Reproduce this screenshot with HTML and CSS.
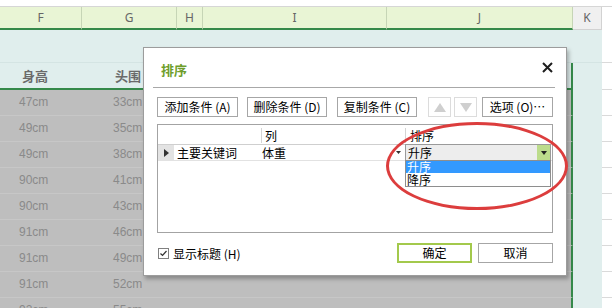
FILE: index.html
```html
<!DOCTYPE html>
<html lang="zh">
<head>
<meta charset="utf-8">
<title>排序</title>
<link rel="stylesheet" href="styles.css">
</head>
<body>
<div class="sheet">
  <div class="top"></div>
  <div class="row colhead">
    <div class="c f">F</div><div class="c g">G</div><div class="c h">H</div><div class="c i">I</div><div class="c j">J</div><div class="c k">K</div><div class="c rest"></div>
  </div>
  <div class="row r1">
    <div class="c f"></div><div class="c g"></div><div class="c h"></div><div class="c i"></div><div class="c j"></div><div class="c k"></div><div class="c rest"></div>
  </div>
  <div class="row r2">
    <div class="c f s">身高</div><div class="c g s">头围</div><div class="c h s"></div><div class="c i s"></div><div class="c j s"></div><div class="c k"></div><div class="c rest"></div>
  </div>
  <div class="row d"><div class="c f s">47cm</div><div class="c g s">33cm</div><div class="c h s"></div><div class="c i s"></div><div class="c j s"></div><div class="c k"></div><div class="c rest"></div></div>
  <div class="row d"><div class="c f s">49cm</div><div class="c g s">35cm</div><div class="c h s"></div><div class="c i s"></div><div class="c j s"></div><div class="c k"></div><div class="c rest"></div></div>
  <div class="row d"><div class="c f s">49cm</div><div class="c g s">38cm</div><div class="c h s"></div><div class="c i s"></div><div class="c j s"></div><div class="c k"></div><div class="c rest"></div></div>
  <div class="row d"><div class="c f s">90cm</div><div class="c g s">41cm</div><div class="c h s"></div><div class="c i s"></div><div class="c j s"></div><div class="c k"></div><div class="c rest"></div></div>
  <div class="row d"><div class="c f s">90cm</div><div class="c g s">43cm</div><div class="c h s"></div><div class="c i s"></div><div class="c j s"></div><div class="c k"></div><div class="c rest"></div></div>
  <div class="row d"><div class="c f s">91cm</div><div class="c g s">46cm</div><div class="c h s"></div><div class="c i s"></div><div class="c j s"></div><div class="c k"></div><div class="c rest"></div></div>
  <div class="row d"><div class="c f s">91cm</div><div class="c g s">49cm</div><div class="c h s"></div><div class="c i s"></div><div class="c j s"></div><div class="c k"></div><div class="c rest"></div></div>
  <div class="row d"><div class="c f s">91cm</div><div class="c g s">52cm</div><div class="c h s"></div><div class="c i s"></div><div class="c j s"></div><div class="c k"></div><div class="c rest"></div></div>
  <div class="row d"><div class="c f s">92cm</div><div class="c g s">55cm</div><div class="c h s"></div><div class="c i s"></div><div class="c j s"></div><div class="c k"></div><div class="c rest"></div></div>
</div>

<div class="dialog">
  <div class="dhead">
    <span class="dtitle">排序</span>
    <svg class="close" width="11" height="11" viewBox="0 0 11 11"><path d="M1 1 L10 10 M10 1 L1 10" stroke="#1e1e1e" stroke-width="2" fill="none"/></svg>
  </div>
  <div class="toolbar">
    <div class="btn b1">添加条件 (A)</div>
    <div class="btn b2">删除条件 (D)</div>
    <div class="btn b3">复制条件 (C)</div>
    <div class="btn arr up"><svg width="12" height="9" viewBox="0 0 12 9"><polygon points="6,0 12,9 0,9" fill="#cfcfcf"/></svg></div>
    <div class="btn arr down"><svg width="12" height="9" viewBox="0 0 12 9"><polygon points="0,0 12,0 6,9" fill="#cfcfcf"/></svg></div>
    <div class="btn opt">选项 (O)…</div>
  </div>
  <div class="grid">
    <div class="ghead">
      <div class="gc1"></div>
      <div class="gc2">列</div>
      <div class="gc3">排序</div>
    </div>
    <div class="grow">
      <div class="rh"><svg width="5" height="8" viewBox="0 0 5 8"><polygon points="0,0 5,4 0,8" fill="#333"/></svg></div>
      <div class="name">主要关键词</div>
      <div class="colv"><span>体重</span><svg width="5" height="3" viewBox="0 0 5 3"><polygon points="0,0 5,0 2.5,3" fill="#333"/></svg></div>
      <div class="combo"><span class="cv">升序</span><span class="cbtn"><svg width="6" height="4" viewBox="0 0 6 4"><polygon points="0,0 6,0 3,4" fill="#222"/></svg></span></div>
    </div>
    <div class="list">
      <div class="item sel">升序</div>
      <div class="item">降序</div>
    </div>
  </div>
  <div class="foot">
    <svg class="chk" width="11" height="11" viewBox="0 0 11 11"><rect x="0.5" y="0.5" width="10" height="10" fill="#fff" stroke="#808080"/><path d="M2.5 5.5 L4.5 7.5 L8.5 3" stroke="#333" stroke-width="1.2" fill="none"/></svg>
    <span class="chklabel">显示标题 (H)</span>
    <div class="btn ok">确定</div>
    <div class="btn cancel">取消</div>
  </div>
</div>

<div class="ring"></div>
</body>
</html>
```

FILE: styles.css
```css
* { box-sizing: border-box; }

body {
  margin: 0;
  width: 612px;
  height: 308px;
  overflow: hidden;
  background: #fff;
  position: relative;
  font-family: "Noto Sans CJK SC", "Noto Sans", sans-serif;
}

.sheet {
  height: 308px;
  overflow: hidden;
}

.top {
  height: 7px;
  border-bottom: 1px solid #d6d6d6;
}

.row { display: flex; }
.c { flex: none; }
.f { width: 82px; }
.g { width: 95px; }
.h { width: 26px; }
.i { width: 184px; }
.j { width: 186px; }
.k { width: 29px; }
.rest { flex: 1; }

/* column header */
.colhead { height: 23px; }
.colhead .c {
  font-family: "Noto Sans", sans-serif;
  font-size: 12px;
  color: #666;
  text-align: center;
  line-height: 21px;
  background: #e9f5d5;
  border-right: 1px solid #c6d5b6;
  border-bottom: 2px solid #35894a;
}
.colhead .k {
  background: #f0f0f0;
  border-right: 1px solid #d2d2d2;
  border-bottom: 1px solid #d2d2d2;
}
.colhead .rest {
  background: #fff;
  border: none;
}

/* row 1 */
.r1 { height: 33px; }
.r1 .c {
  background: #e0eeed;
  border-bottom: 1px solid #d4e4e3;
}
.r1 .rest {
  background: #fff;
  border-bottom: 1px solid #dadada;
}

/* row 2: labels */
.r2 { height: 27px; }
.r2 .c {
  background: #e0eeed;
  font-size: 13px;
  font-weight: bold;
  color: #6a6a6a;
  line-height: 25px;
}
.r2 .s { border-bottom: 2px solid #35894a; }
.r2 .j { border-right: 2px solid #35894a; }
.r2 .f { padding-left: 22px; }
.r2 .g { padding-left: 33px; }
.r2 .rest {
  background: #fff;
  border-bottom: 1px solid #dadada;
}

/* data rows */
.d { height: 26px; }
.d .c {
  background: #e0eeed;
}
.d .s {
  background: #bebebe;
  border-bottom: 1px solid #c7c7c7;
  font-family: "Liberation Sans", Arial, sans-serif;
  font-size: 12px;
  color: #8a8a8a;
  line-height: 25px;
}
.d .f { padding-left: 19px; }
.d .g { padding-left: 31px; }
.d .j { border-right: 2px solid #35894a; }
.d .rest {
  background: #fff;
  border-bottom: 1px solid #dadada;
}

/* dialog */
.dialog {
  position: absolute;
  left: 143px;
  top: 47px;
  width: 424px;
  height: 229px;
  background: #fff;
  border: 1px solid #9c9c9c;
  box-shadow: 2px 3px 4px rgba(0, 0, 0, 0.28);
  padding: 0 13px;
  font-size: 12px;
  color: #000;
}

.dhead {
  height: 40px;
  margin: 0 -2px 0 -4px;
  padding: 4px 2px 0 8px;
  border-bottom: 1px solid #a8a8a8;
  display: flex;
  align-items: center;
  justify-content: space-between;
}
.dtitle {
  font-size: 13px;
  font-weight: bold;
  color: #6f9e2c;
}
.close { margin-top: -4px; }

.toolbar {
  display: flex;
  margin-top: 9px;
  height: 20px;
}
.btn {
  flex: none;
  height: 20px;
  border: 1px solid #a6a6a6;
  background: #fff;
  display: flex;
  align-items: center;
  justify-content: center;
  font-size: 12px;
  line-height: 1;
  white-space: nowrap;
}
.b1 { width: 81px; }
.b2 { width: 80px; margin-left: 9px; }
.b3 { width: 80px; margin-left: 10px; }
.arr { width: 23px; border-color: #dcdcdc; }
.up { margin-left: 11px; }
.down { margin-left: 3px; }
.opt { width: 71px; margin-left: 5px; }

.grid {
  margin-top: 7px;
  height: 109px;
  border: 1px solid #a3a3a3;
  position: relative;
}
.ghead {
  display: flex;
  height: 20px;
  border-bottom: 1px solid #cfcfcf;
  line-height: 19px;
}
.gc1 { width: 103px; }
.gc2 {
  width: 144px;
  padding-left: 3px;
  border-left: 1px solid #d4d4d4;
  margin: 3px 0 1px;
  line-height: 15px;
}
.gc3 {
  flex: 1;
  padding-left: 4px;
  border-left: 1px solid #d4d4d4;
  margin: 3px 0 1px;
  line-height: 15px;
}

.grow {
  display: flex;
  height: 16px;
  border-bottom: 1px solid #e2e2e2;
  line-height: 15px;
}
.rh {
  width: 16px;
  background: #e3e3e3;
  display: flex;
  align-items: center;
  justify-content: center;
}
.name {
  width: 87px;
  padding-left: 3px;
}
.colv {
  width: 144px;
  padding: 0 4px 0 1px;
  display: flex;
  align-items: center;
  justify-content: space-between;
}
.combo {
  width: 146px;
  height: 17px;
  margin-top: -1px;
  border: 1px solid #9a9a9a;
  background: #ededed;
  display: flex;
  justify-content: space-between;
}
.cv { padding-left: 2px; }
.cbtn {
  width: 13px;
  background: #bcdc8c;
  display: flex;
  align-items: center;
  justify-content: center;
}

.list {
  position: absolute;
  left: 247px;
  top: 35px;
  width: 146px;
  height: 27px;
  border: 1px solid #8e8e8e;
  background: #fff;
}
.item {
  height: 12px;
  line-height: 12px;
  padding-left: 1px;
}
.item + .item { height: 13px; line-height: 13px; }
.item.sel {
  background: #3399ff;
  color: #fff;
}

.foot {
  display: flex;
  align-items: center;
  margin-top: 10px;
  height: 20px;
}
.chk { margin-left: 1px; flex: none; }
.chklabel { margin-left: 4px; }
.ok {
  width: 75px;
  margin-left: auto;
  border: 2px solid #a3c94c;
}
.cancel {
  width: 75px;
  margin-left: 6px;
}

.ring {
  position: absolute;
  left: 386px;
  top: 122px;
  width: 182px;
  height: 88px;
  border: 3px solid #dc3d3d;
  border-radius: 50%;
}
```
